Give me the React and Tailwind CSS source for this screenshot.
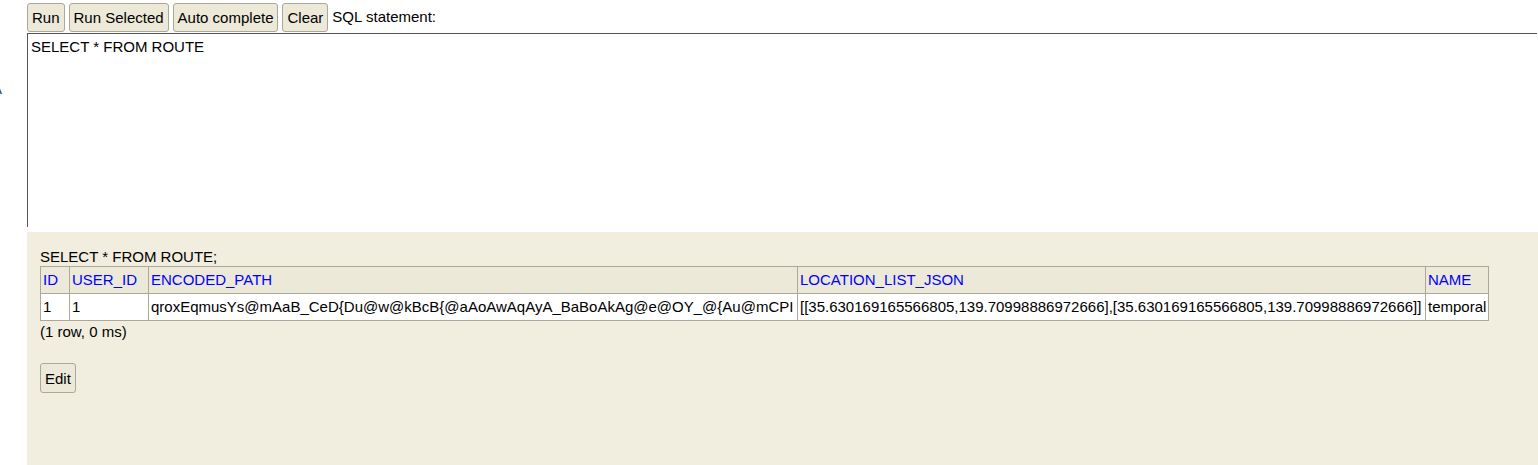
export default function App() {
  const font = { fontFamily: '"Liberation Sans", Arial, sans-serif' };
  const btn =
    "h-[29px] px-[4px] bg-[#ece9d8] border border-[#aca899] rounded-[3px] text-[15px] text-black leading-none";
  const th = "border border-[#aca899] bg-[#ece9d8] text-[#0000ff] font-normal text-left px-[2px] h-[27px] whitespace-nowrap";
  const td = "border border-[#aca899] bg-white text-left px-[2px] h-[27px] whitespace-nowrap";
  return (
    <div className="flex w-[1538px] h-[465px] bg-white text-[15px] text-black overflow-hidden" style={font}>
      <div className="w-[27px] shrink-0 overflow-hidden relative">
        <span className="absolute left-[-8px] top-[78px] text-[#1a3cc0] text-[15px]">A</span>
      </div>
      <div className="flex-1 flex flex-col min-w-0">
        <div className="h-[33px] flex items-center gap-[4px] pt-[3px] pb-[1px]">
          <button className={btn}>Run</button>
          <button className={btn}>Run Selected</button>
          <button className={btn}>Auto complete</button>
          <button className={btn}>Clear</button>
          <span>SQL statement:</span>
        </div>
        <div className="h-[194px] border-t border-l border-[#555] mr-[1px] px-[3px] pt-[4px] leading-[18px]">
          SELECT * FROM ROUTE
        </div>
        <div className="h-[5px]" />
        <div className="flex-1 bg-[#f1eddf] pl-[13px] pt-[15px]">
          <div className="h-[19px] leading-[19px]">SELECT * FROM ROUTE;</div>
          <table className="border-collapse border border-[#aca899]">
            <thead>
              <tr>
                <th className={th + " w-[29px]"}>ID</th>
                <th className={th + " w-[79px]"}>USER_ID</th>
                <th className={th + " w-[649px]"}>ENCODED_PATH</th>
                <th className={th + " w-[628px]"}>LOCATION_LIST_JSON</th>
                <th className={th}>NAME</th>
              </tr>
            </thead>
            <tbody>
              <tr>
                <td className={td}>1</td>
                <td className={td}>1</td>
                <td className={td}>qroxEqmusYs@mAaB_CeD{"{"}Du@w@kBcB{"{"}@aAoAwAqAyA_BaBoAkAg@e@OY_@{"{"}Au@mCPI</td>
                <td className={td}>[[35.630169165566805,139.70998886972666],[35.630169165566805,139.70998886972666]]</td>
                <td className={td}>temporal</td>
              </tr>
            </tbody>
          </table>
          <div className="h-[22px] leading-[22px]">(1 row, 0 ms)</div>
          <div className="h-[20px]" />
          <button className={btn + " h-[30px] px-[3px]"}>Edit</button>
        </div>
      </div>
    </div>
  );
}
